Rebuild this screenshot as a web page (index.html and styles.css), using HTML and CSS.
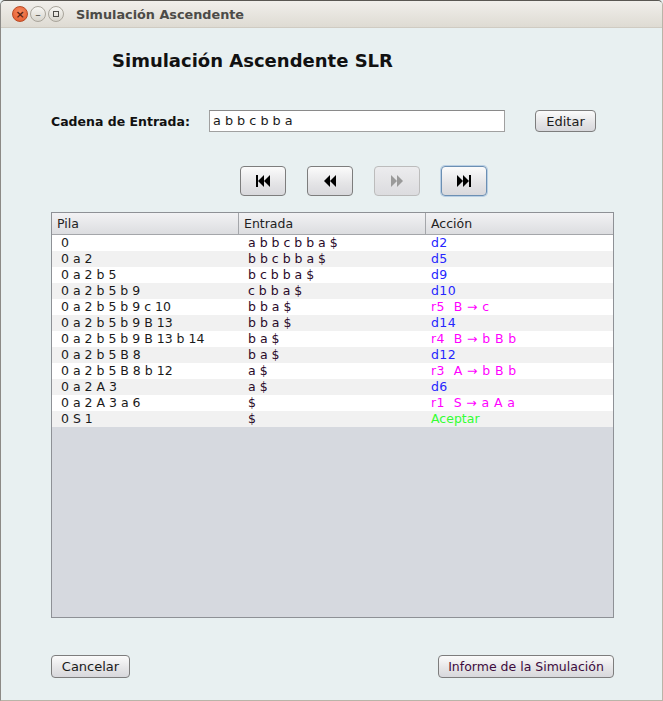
FILE: index.html
```html
<!DOCTYPE html>
<html>
<head>
<meta charset="utf-8">
<link rel="stylesheet" href="styles.css">
</head>
<body>
<div class="window">
  <div class="titlebar">
    <div class="wbtns">
      <span class="wb close">×</span>
      <span class="wb min">–</span>
      <span class="wb max"><span class="sq"></span></span>
    </div>
    <span class="wtitle">Simulación Ascendente</span>
  </div>
  <div class="content">
    <h1 class="heading">Simulación Ascendente SLR</h1>
    <div class="inputrow">
      <label class="lbl">Cadena de Entrada:</label>
      <div class="field">a b b c b b a</div>
      <button class="btn editar">Editar</button>
    </div>
    <div class="navrow">
      <button class="btn nav"><svg width="16" height="14" viewBox="0 0 16 14"><rect x="1" y="1" width="2" height="12" fill="#000"/><polygon points="9,1 3,7 9,13" fill="#000"/><polygon points="15,1 9,7 15,13" fill="#000"/></svg></button>
      <button class="btn nav"><svg width="16" height="14" viewBox="0 0 16 14"><polygon points="8,1 2,7 8,13" fill="#000"/><polygon points="14,1 8,7 14,13" fill="#000"/></svg></button>
      <button class="btn nav disabled"><svg width="16" height="14" viewBox="0 0 16 14"><polygon points="2,1 8,7 2,13" fill="#9a9a9a"/><polygon points="8,1 14,7 8,13" fill="#9a9a9a"/></svg></button>
      <button class="btn nav focused"><svg width="16" height="14" viewBox="0 0 16 14"><polygon points="1,1 7,7 1,13" fill="#000"/><polygon points="7,1 13,7 7,13" fill="#000"/><rect x="13" y="1" width="2" height="12" fill="#000"/></svg></button>
    </div>
    <div class="table">
      <div class="thead">
        <div class="th">Pila</div>
        <div class="th">Entrada</div>
        <div class="th last">Acción</div>
      </div>
      <div class="tbody">
        <div class="tr"><span class="c1">0</span><span class="c2">a b b c b b a $</span><span class="c3 sh">d2</span></div>
        <div class="tr alt"><span class="c1">0 a 2</span><span class="c2">b b c b b a $</span><span class="c3 sh">d5</span></div>
        <div class="tr"><span class="c1">0 a 2 b 5</span><span class="c2">b c b b a $</span><span class="c3 sh">d9</span></div>
        <div class="tr alt"><span class="c1">0 a 2 b 5 b 9</span><span class="c2">c b b a $</span><span class="c3 sh">d10</span></div>
        <div class="tr"><span class="c1">0 a 2 b 5 b 9 c 10</span><span class="c2">b b a $</span><span class="c3 rd">r5&nbsp;&nbsp;B → c</span></div>
        <div class="tr alt"><span class="c1">0 a 2 b 5 b 9 B 13</span><span class="c2">b b a $</span><span class="c3 sh">d14</span></div>
        <div class="tr"><span class="c1">0 a 2 b 5 b 9 B 13 b 14</span><span class="c2">b a $</span><span class="c3 rd">r4&nbsp;&nbsp;B → b B b</span></div>
        <div class="tr alt"><span class="c1">0 a 2 b 5 B 8</span><span class="c2">b a $</span><span class="c3 sh">d12</span></div>
        <div class="tr"><span class="c1">0 a 2 b 5 B 8 b 12</span><span class="c2">a $</span><span class="c3 rd">r3&nbsp;&nbsp;A → b B b</span></div>
        <div class="tr alt"><span class="c1">0 a 2 A 3</span><span class="c2">a $</span><span class="c3 sh">d6</span></div>
        <div class="tr"><span class="c1">0 a 2 A 3 a 6</span><span class="c2">$</span><span class="c3 rd">r1&nbsp;&nbsp;S → a A a</span></div>
        <div class="tr alt"><span class="c1">0 S 1</span><span class="c2">$</span><span class="c3 ok">Aceptar</span></div>
      </div>
    </div>
    <div class="bottomrow">
      <button class="btn cancel">Cancelar</button>
      <button class="btn informe">Informe de la Simulación</button>
    </div>
  </div>
</div>
</body>
</html>
```
FILE: styles.css
```css
* { box-sizing: border-box; }
html, body { margin: 0; padding: 0; }
body {
  width: 663px;
  height: 701px;
  background: #e8f0f1;
  font-family: "DejaVu Sans", sans-serif;
  font-size: 12px;
  color: #1a1a1a;
  overflow: hidden;
}
.window {
  width: 663px;
  height: 701px;
  border-left: 1px solid #8c8a86;
  border-right: 1px solid #b9b4a8;
  border-bottom: 1px solid #b9b4a8;
  border-top: 1px solid #5a5752;
  border-radius: 5px 5px 0 0;
  display: flex;
  flex-direction: column;
  background: #e8f0f1;
}
.titlebar {
  height: 27px;
  flex: none;
  display: flex;
  align-items: center;
  background: linear-gradient(#f1efeb, #dedbd3);
  border-bottom: 1px solid #cfcbc2;
  border-radius: 5px 5px 0 0;
}
.wbtns {
  display: flex;
  align-items: center;
  padding-left: 11px;
  gap: 2px;
}
.wb {
  width: 16px;
  height: 16px;
  border-radius: 50%;
  display: flex;
  align-items: center;
  justify-content: center;
  font-size: 11px;
  line-height: 1;
}
.close {
  background: radial-gradient(circle at 50% 35%, #f68a5f, #e3572a);
  border: 1px solid #b84a24;
  color: #5b2210;
  font-weight: bold;
}
.min, .max {
  background: linear-gradient(#f8f7f4, #d7d4cc);
  border: 1px solid #a9a59b;
  color: #4c4b47;
}
.sq {
  width: 6px;
  height: 6px;
  border: 1px solid #4c4b47;
}
.wtitle {
  margin-left: 12px;
  font-weight: bold;
  font-size: 12.8px;
  color: #4c4b47;
}
.content {
  flex: 1;
  display: flex;
  flex-direction: column;
  padding: 0 49px 0 50px;
}
.heading {
  margin: 22px 0 0 61px;
  font-size: 18px;
  line-height: 22px;
  font-weight: bold;
  color: #111;
}
.inputrow {
  display: flex;
  align-items: center;
  margin-top: 38px;
  height: 22px;
}
.lbl {
  font-weight: bold;
  font-size: 12.5px;
  color: #111;
  width: 158px;
}
.field {
  width: 296px;
  height: 22px;
  background: #fff;
  border: 1px solid #a0a0a0;
  border-top-color: #8a8a8a;
  padding: 2px 3px;
  font-size: 12.8px;
  line-height: 16px;
  color: #1a1a1a;
}
.btn {
  font-family: "DejaVu Sans", sans-serif;
  font-size: 12px;
  color: #1a1a1a;
  background: linear-gradient(#fbfbfb, #e4e4e6 60%, #d8d8dc);
  border: 1px solid #7d7d7d;
  border-radius: 4px;
  padding: 0;
  display: flex;
  align-items: center;
  justify-content: center;
}
.editar {
  margin-left: 30px;
  width: 61px;
  height: 22px;
  font-size: 13px;
}
.navrow {
  display: flex;
  margin-top: 34px;
  padding-left: 189px;
  gap: 21px;
  height: 30px;
}
.nav {
  width: 46px;
  height: 30px;
}
.nav.disabled {
  border-color: #bcbcbc;
  background: linear-gradient(#ececee, #dcdcdf);
}
.nav.focused {
  border: 1px solid #6b8fb3;
  box-shadow: 0 0 0 1px #b9cfe4;
}
.table {
  margin-top: 16px;
  width: 563px;
  height: 406px;
  border: 1px solid #8e9196;
  background: #d6d9df;
  display: flex;
  flex-direction: column;
}
.thead {
  display: flex;
  height: 22px;
  flex: none;
  background: linear-gradient(#f2f2f4, #dcdde0);
  border-bottom: 1px solid #a4a6aa;
}
.th {
  width: 187px;
  border-right: 1px solid #a4a6aa;
  padding-left: 5px;
  line-height: 21px;
  font-size: 12.5px;
  color: #222;
}
.th.last {
  border-right: none;
  width: 187px;
}
.tbody {
  display: flex;
  flex-direction: column;
}
.tr {
  display: flex;
  height: 16px;
  line-height: 16px;
  background: #fff;
  font-size: 12.5px;
}
.tr.alt { background: #f1f1f1; }
.c1 { width: 187px; padding-left: 9px; color: #1a1a1a; }
.c2 { width: 187px; padding-left: 9px; color: #2a0a2a; }
.c3 { width: 187px; padding-left: 5px; letter-spacing: 0.4px; }
.sh { color: #2626ff; }
.rd { color: #ff00ff; }
.ok { color: #33ff33; letter-spacing: 0; }
.bottomrow {
  display: flex;
  justify-content: space-between;
  margin-top: 37px;
  width: 563px;
}
.cancel {
  width: 79px;
  height: 23px;
  font-size: 13px;
}
.informe {
  width: 176px;
  height: 23px;
  font-size: 12.5px;
  color: #3d0b3d;
}
```
